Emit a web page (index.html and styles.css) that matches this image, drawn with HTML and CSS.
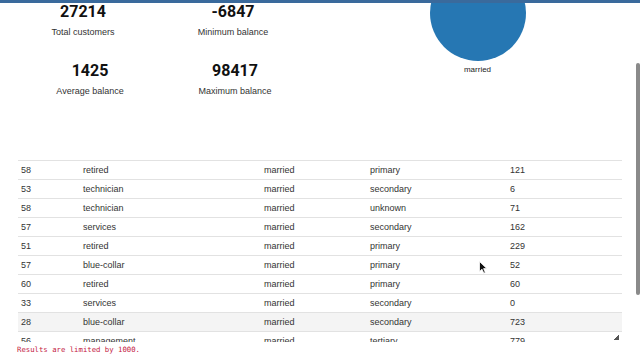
FILE: index.html
```html
<!DOCTYPE html>
<html>
<head>
  <meta name="viewport" content="width=device-width, initial-scale=1.0">
  <link rel="stylesheet" href="styles.css">
</head>
<body>
  <div id="topbar"></div>

  <div class="summary">
    <div class="stats">
      <div class="stat">
        <div class="stat_value">27214</div>
        <div class="stat_label">Total customers</div>
      </div>
      <div class="stat">
        <div class="stat_value">-6847</div>
        <div class="stat_label">Minimum balance</div>
      </div>
      <div class="stat avg">
        <div class="stat_value">1425</div>
        <div class="stat_label">Average balance</div>
      </div>
      <div class="stat max">
        <div class="stat_value">98417</div>
        <div class="stat_label">Maximum balance</div>
      </div>
    </div>
    <div class="chart">
      <svg width="100" height="61" viewBox="0 0 100 61">
        <circle cx="50" cy="13" r="48" fill="#2677b3"></circle>
      </svg>
      <div class="chart_label">married</div>
    </div>
  </div>

  <div class="results">
    <div class="table_wrap">
      <table>
        <tr><td class="c_age">58</td><td class="c_job">retired</td><td class="c_marital">married</td><td class="c_edu">primary</td><td>121</td></tr>
        <tr><td class="c_age">53</td><td class="c_job">technician</td><td class="c_marital">married</td><td class="c_edu">secondary</td><td>6</td></tr>
        <tr><td class="c_age">58</td><td class="c_job">technician</td><td class="c_marital">married</td><td class="c_edu">unknown</td><td>71</td></tr>
        <tr><td class="c_age">57</td><td class="c_job">services</td><td class="c_marital">married</td><td class="c_edu">secondary</td><td>162</td></tr>
        <tr><td class="c_age">51</td><td class="c_job">retired</td><td class="c_marital">married</td><td class="c_edu">primary</td><td>229</td></tr>
        <tr><td class="c_age">57</td><td class="c_job">blue-collar</td><td class="c_marital">married</td><td class="c_edu">primary</td><td>52</td></tr>
        <tr><td class="c_age">60</td><td class="c_job">retired</td><td class="c_marital">married</td><td class="c_edu">primary</td><td>60</td></tr>
        <tr><td class="c_age">33</td><td class="c_job">services</td><td class="c_marital">married</td><td class="c_edu">secondary</td><td>0</td></tr>
        <tr class="hover"><td class="c_age">28</td><td class="c_job">blue-collar</td><td class="c_marital">married</td><td class="c_edu">secondary</td><td>723</td></tr>
        <tr><td class="c_age">56</td><td class="c_job">management</td><td class="c_marital">married</td><td class="c_edu">tertiary</td><td>779</td></tr>
        <tr><td class="c_age">41</td><td class="c_job">admin.</td><td class="c_marital">married</td><td class="c_edu">secondary</td><td>310</td></tr>
      </table>
    </div>
    <p class="limit">Results are limited by 1000.</p>
  </div>

  <!-- page scrollbar and mouse pointer from the screenshot -->
  <div id="scrollbar"></div>
  <svg id="pointer" width="9" height="13" viewBox="0 0 9 13">
    <path d="M0.5 0.5 L0.5 10.5 L3 8.2 L4.8 12.2 L6.3 11.5 L4.6 7.6 L7.8 7.6 Z" fill="#111" stroke="#fff" stroke-width="0.8"></path>
  </svg>
</body>
</html>
```

FILE: styles.css
```css
html, body {
  margin: 0;
  width: 640px;
  height: 360px;
  overflow: hidden;
  background-color: #fff;
}
body {
  font-family: "Liberation Sans", Arial, sans-serif;
  font-size: 9px;
  color: #333;
}
#topbar {
  position: fixed;
  top: 0;
  left: 0;
  right: 0;
  height: 3px;
  background-color: #3a6a9c;
  z-index: 2;
}
.summary {
  display: grid;
  grid-template-columns: 316px 1fr;
  height: 120px;
}
.stats {
  display: grid;
  grid-template-columns: 150px 150px;
  padding: 2px 8px 0 8px;
}
.stat {
  height: 59px;
  text-align: center;
}
/* second row sits a little to the right in the original */
.stat.avg {
  padding-left: 14px;
}
.stat.max {
  padding-left: 4px;
}
.stat_value {
  font-family: Roboto, "Liberation Sans", sans-serif;
  font-weight: 700;
  font-size: 16px;
  line-height: 20px;
  color: #111;
}
.stat_label {
  margin-top: 4px;
  line-height: 12px;
  font-size: 9px;
}
.chart {
  display: flex;
  flex-direction: column;
  align-items: center;
  padding-right: 1px;
}
.chart svg {
  display: block;
}
.chart_label {
  margin-top: 3px;
  line-height: 12px;
  font-size: 8px;
  color: #222;
}
.results {
  margin-top: 40px;
}
.table_wrap {
  margin-left: 18px;
  width: 604px;
  height: 182px;
  overflow: hidden;
  resize: vertical;
}
.table_wrap::-webkit-resizer {
  background: linear-gradient(to bottom right, transparent 50%, #555 50%) no-repeat;
  background-size: 5px 6px;
  background-position: right 3px bottom 2px;
}
table {
  width: 100%;
  border-collapse: collapse;
}
td {
  border-top: 1px solid #e2e2e2;
  padding: 3px 3px;
  line-height: 12px;
  white-space: nowrap;
}
.c_age {
  width: 56px;
}
.c_job {
  width: 175px;
}
.c_marital {
  width: 100px;
}
.c_edu {
  width: 134px;
}
tr.hover td {
  background-color: #f4f4f4;
}
.limit {
  margin: 3px 0 0 17px;
  font-family: "DejaVu Sans Mono", "Liberation Mono", monospace;
  font-size: 7.3px;
  line-height: 10px;
  color: #c4203f;
}
#scrollbar {
  position: fixed;
  right: 0;
  top: 63px;
  width: 4px;
  height: 232px;
  border-radius: 3px;
  background-color: #8a8a8a;
}
#pointer {
  position: fixed;
  left: 479px;
  top: 261px;
}
```
